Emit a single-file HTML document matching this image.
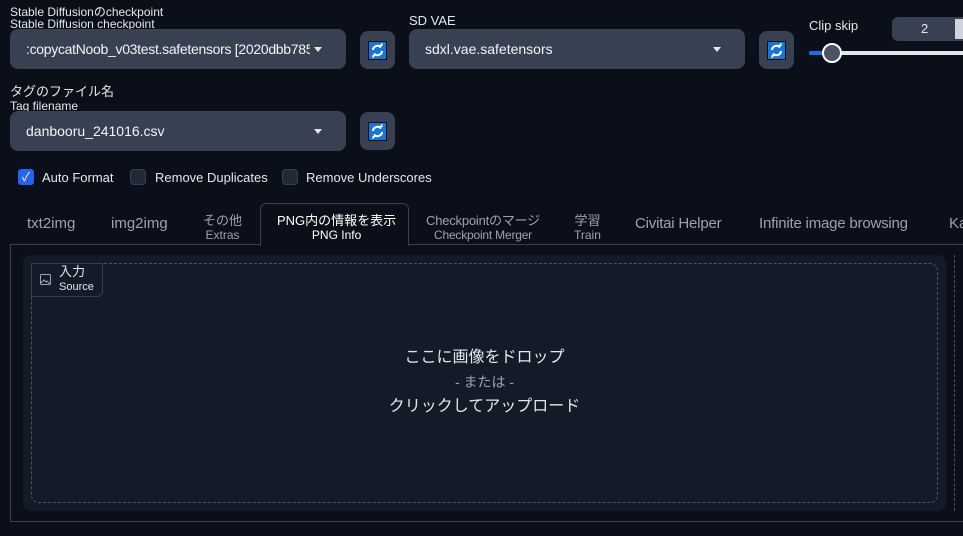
<!DOCTYPE html>
<html><head><meta charset="utf-8"><style>
*{box-sizing:border-box;margin:0;padding:0}
body{width:963px;height:536px;overflow:hidden;background:#0b0f19;color:#e5e7eb;font-family:"Liberation Sans","Noto Sans CJK JP",sans-serif;position:relative}
.a{position:absolute}
.lbl{font-size:12px;color:#e5e7eb;line-height:12px}
.dd{background:#374151;border-radius:8px;height:40px;font-size:14px;color:#f3f4f6;line-height:40px;overflow:hidden;white-space:nowrap}
.dd .t{position:absolute;left:16px;top:0;overflow:hidden}
.dd .car{position:absolute;right:24px;top:18px;width:0;height:0;border-left:4.5px solid transparent;border-right:4.5px solid transparent;border-top:5px solid #e5e7eb}
.rb{background:#374151;border-radius:8px;width:35px;height:38px}
.rb svg{position:absolute;left:8px;top:10px}
.cb{width:16px;height:16px;border-radius:4px;background:#1f2937;border:1px solid #374151}
.ck{font-size:13px;color:#e5e7eb}
.tab{font-size:15px;color:#9ca3af;text-align:center;white-space:nowrap}
.tab2{font-size:13px;color:#9ca3af;text-align:center;line-height:14px;white-space:nowrap}
.tab2 small{font-size:12px;display:block}
</style></head><body>
<svg width="0" height="0" style="position:absolute"><defs><g id="rf"><rect x="0.5" y="0.5" width="18" height="18" fill="#1976d2" stroke="#111"/><path d="M5 9a4.5 4.5 0 0 1 8-2.5" fill="none" stroke="#fff" stroke-width="2"/><path d="M11 5h3.5v-3.5z" fill="#fff"/><path d="M14 10a4.5 4.5 0 0 1-8 2.5" fill="none" stroke="#fff" stroke-width="2"/><path d="M8 14h-3.5v3.5z" fill="#fff"/></g></defs></svg>
<div class="a lbl" style="left:10px;top:6px">Stable Diffusionのcheckpoint</div>
<div class="a lbl" style="left:10px;top:18px">Stable Diffusion checkpoint</div>
<div class="a dd" style="left:10px;top:29px;width:336px"><span class="t" style="width:284px;letter-spacing:-0.3px">:copycatNoob_v03test.safetensors [2020dbb785]</span><span class="car"></span></div>
<div class="a rb" style="left:360px;top:31px"><svg width="19" height="19"><use href="#rf"/></svg></div>
<div class="a lbl" style="left:409px;top:15px;font-size:13px">SD VAE</div>
<div class="a dd" style="left:409px;top:29px;width:336px"><span class="t">sdxl.vae.safetensors</span><span class="car"></span></div>
<div class="a rb" style="left:759px;top:31px"><svg width="19" height="19"><use href="#rf"/></svg></div>
<div class="a lbl" style="left:809px;top:20px;font-size:13px">Clip skip</div>
<div class="a" style="left:892px;top:17px;width:80px;height:24px;background:#374151;border-radius:6px;font-size:13px;line-height:24px;padding-left:29px">2</div>
<div class="a" style="left:955px;top:19px;width:8px;height:20px;background:#d1d5db"></div>
<div class="a" style="left:809px;top:51px;width:160px;height:4px;background:#e5e7eb;border-radius:2px"></div>
<div class="a" style="left:809px;top:51px;width:22px;height:4px;background:#1d6fe0;border-radius:2px"></div>
<div class="a" style="left:822px;top:43px;width:20px;height:20px;border-radius:50%;background:#4b5563;border:2px solid #fff"></div>
<div class="a lbl" style="left:10px;top:86px;font-size:13px">タグのファイル名</div>
<div class="a lbl" style="left:10px;top:100px">Tag filename</div>
<div class="a dd" style="left:10px;top:111px;width:336px"><span class="t">danbooru_241016.csv</span><span class="car"></span></div>
<div class="a rb" style="left:360px;top:112px"><svg width="19" height="19"><use href="#rf"/></svg></div>
<div class="a" style="left:18px;top:169px;width:16px;height:16px;border-radius:3px;background:#2563eb;color:#fff;font-size:12px;line-height:16px;text-align:center">✓</div>
<div class="a ck" style="left:42px;top:170px">Auto Format</div>
<div class="a cb" style="left:130px;top:169px"></div>
<div class="a ck" style="left:155px;top:170px">Remove Duplicates</div>
<div class="a cb" style="left:282px;top:169px"></div>
<div class="a ck" style="left:306px;top:170px">Remove Underscores</div>
<div class="a" style="left:10px;top:244px;width:953px;height:278px;border:1px solid #374151;border-right:none"></div>
<div class="a" style="left:260px;top:203px;width:149px;height:43px;border:1px solid #374151;border-bottom:none;border-radius:6px 6px 0 0;background:#0b0f19"></div>
<div class="a tab" style="left:27px;top:215px">txt2img</div>
<div class="a tab" style="left:111px;top:215px">img2img</div>
<div class="a tab2" style="left:203px;top:214px">その他<small>Extras</small></div>
<div class="a tab2" style="left:277px;top:214px;color:#fff">PNG内の情報を表示<small>PNG Info</small></div>
<div class="a tab2" style="left:426px;top:214px;letter-spacing:-0.2px">Checkpointのマージ<small>Checkpoint Merger</small></div>
<div class="a tab2" style="left:574px;top:214px">学習<small>Train</small></div>
<div class="a tab" style="left:635px;top:215px;letter-spacing:-0.2px">Civitai Helper</div>
<div class="a tab" style="left:759px;top:215px;letter-spacing:-0.2px">Infinite image browsing</div>
<div class="a tab" style="left:949px;top:215px">Ka</div>
<div class="a" style="left:23px;top:255px;width:923px;height:256px;background:#131a28;border-radius:8px"></div>
<div class="a" style="left:31px;top:263px;width:907px;height:240px;border:1px dashed #4b5563;border-radius:8px"></div>
<div class="a" style="left:954px;top:255px;height:256px;border-left:1px dashed #4b5563"></div>
<div class="a" style="left:31px;top:263px;width:72px;height:34px;border:1px solid #374151;border-radius:0 0 6px 0;background:#131a28"></div>
<svg class="a" style="left:40px;top:274px" width="11" height="11" viewBox="0 0 11 11"><rect x="0.5" y="0.5" width="10" height="10" rx="1" fill="none" stroke="#9ca3af"/><path d="M1 9l3-3 2 2 1-1 3 3" fill="none" stroke="#9ca3af"/></svg>
<div class="a" style="left:59px;top:265px;font-size:13px;line-height:14px">入力<br><span style="font-size:11px">Source</span></div>
<div class="a" style="left:31px;top:346px;width:907px;text-align:center;font-size:16px;line-height:24px;color:#e5e7eb">ここに画像をドロップ<br><span style="color:#9ca3af;font-size:14px">- または -</span><br>クリックしてアップロード</div>
</body></html>
